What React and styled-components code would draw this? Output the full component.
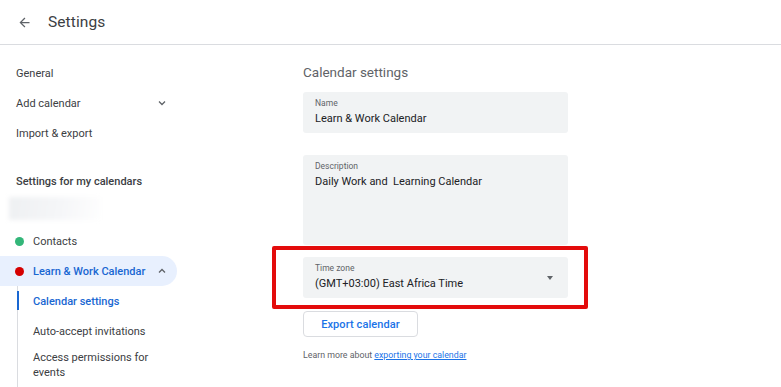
import React from "react";
import styled, { createGlobalStyle } from "styled-components";

const GlobalStyle = createGlobalStyle`
  html, body {
    margin: 0;
    padding: 0;
    background: #fff;
    font-family: Roboto, "Liberation Sans", Arial, sans-serif;
    color: #3c4043;
    overflow: hidden;
  }
`;

const Page = styled.div`
  width: 781px;
  height: 387px;
  display: flex;
  flex-direction: column;
  overflow: hidden;
`;

const Header = styled.header`
  height: 44px;
  flex: none;
  display: flex;
  align-items: center;
  border-bottom: 1px solid #dadce0;
  padding-left: 17px;
  gap: 16px;
`;

const BackButton = styled.span`
  display: flex;
  width: 15px;
  height: 15px;
  color: #5f6368;
`;

const Title = styled.h1`
  margin: 0;
  font-size: 15.5px;
  font-weight: 400;
  color: #3c4043;
  letter-spacing: 0.1px;
`;

const Body = styled.div`
  flex: 1;
  display: flex;
  min-height: 0;
`;

const Sidebar = styled.nav`
  width: 260px;
  flex: none;
  padding-top: 13px;
  display: flex;
  flex-direction: column;
`;

const NavItem = styled.div`
  width: 177px;
  height: 30px;
  box-sizing: border-box;
  display: flex;
  align-items: center;
  padding-left: ${(p) => (p.$indent ? "33px" : "16px")};
  padding-right: 10px;
  font-size: 11px;
  color: ${(p) => (p.$active ? "#1967d2" : "#3c4043")};
  font-weight: ${(p) => (p.$active ? 500 : 400)};
  background: ${(p) => (p.$active ? "#e8f0fe" : "transparent")};
  border-radius: 0 15px 15px 0;
`;

const Grow = styled.span`
  flex: 1;
`;

const Section = styled.div`
  margin-top: 18px;
  height: 30px;
  display: flex;
  align-items: center;
  padding-left: 16px;
  font-size: 11px;
  font-weight: 500;
  color: #3c4043;
`;

const Blurred = styled.div`
  margin: 1px 0 6px 9px;
  width: 92px;
  height: 23px;
  background: linear-gradient(100deg, #eef0f2 0%, #f5f6f8 55%, #fefefe 100%);
  filter: blur(2px);
`;

const Dot = styled.span`
  width: 9px;
  height: 9px;
  border-radius: 50%;
  background: ${(p) => p.$color};
  margin-left: -1px;
  margin-right: 9px;
  flex: none;
`;

const SubList = styled.div`
  margin-left: 17px;
  border-left: 1px solid #dadce0;
  flex: 1;
`;

const SubItem = styled.div`
  position: relative;
  width: 160px;
  box-sizing: border-box;
  padding: ${(p) => (p.$wrap ? "4px 16px 0 15px" : "0 0 0 15px")};
  height: ${(p) => (p.$wrap ? "auto" : "30px")};
  display: flex;
  align-items: center;
  font-size: 11px;
  line-height: 15px;
  color: ${(p) => (p.$active ? "#1967d2" : "#3c4043")};
  font-weight: ${(p) => (p.$active ? 500 : 400)};

  &::before {
    content: "";
    display: ${(p) => (p.$active ? "block" : "none")};
    position: absolute;
    left: -1px;
    top: 5px;
    bottom: 6px;
    width: 2px;
    background: #1967d2;
  }
`;

const Main = styled.main`
  flex: 1;
  padding: 17px 0 0 43px;
  display: flex;
  flex-direction: column;
`;

const PanelTitle = styled.h2`
  margin: 0 0 10px;
  font-size: 13.5px;
  line-height: 20px;
  font-weight: 400;
  color: #5f6368;
`;

const Field = styled.div`
  width: 265px;
  height: ${(p) => p.$height}px;
  box-sizing: border-box;
  background: #f1f3f4;
  border-radius: 3px;
  padding: 6px 12px 0;
  display: flex;
  align-items: flex-start;
  margin-bottom: ${(p) => p.$gap || 0}px;
`;

const FieldText = styled.div`
  flex: 1;
  display: flex;
  flex-direction: column;
`;

const Label = styled.span`
  font-size: 8.5px;
  line-height: 11px;
  color: #5f6368;
`;

const Value = styled.span`
  margin-top: 2px;
  font-size: 11px;
  line-height: 16px;
  color: #202124;
`;

const Caret = styled.span`
  margin-top: 13px;
  margin-right: 3px;
  width: 0;
  height: 0;
  border-left: 3.5px solid transparent;
  border-right: 3.5px solid transparent;
  border-top: 4px solid #5f6368;
`;

const Highlight = styled.div`
  position: relative;
  width: 265px;
  margin-bottom: 13px;
`;

const RedFrame = styled.div`
  position: absolute;
  top: -11px;
  bottom: -11px;
  left: -31px;
  right: -20px;
  border: 4px solid #e30b0b;
  border-radius: 2px;
  pointer-events: none;
`;

const Button = styled.button`
  width: 115px;
  height: 26px;
  box-sizing: border-box;
  background: #fff;
  border: 1px solid #dadce0;
  border-radius: 4px;
  font-family: inherit;
  font-size: 11px;
  font-weight: 500;
  color: #1a73e8;
  letter-spacing: 0.1px;
  padding: 0;
  margin-bottom: 12px;
`;

const Note = styled.p`
  margin: 0;
  font-size: 8.8px;
  line-height: 12px;
  color: #5f6368;

  & a {
    color: #1a73e8;
    text-decoration: underline;
  }
`;

const Chevron = ({ up }) => (
  <svg width="10" height="10" viewBox="0 0 10 10">
    <path
      d={up ? "M2 6.5 L5 3.5 L8 6.5" : "M2 3.5 L5 6.5 L8 3.5"}
      fill="none"
      stroke="#5f6368"
      strokeWidth="1.3"
    />
  </svg>
);

export default function App() {
  return (
    <Page>
      <GlobalStyle />
      <Header>
        <BackButton>
          <svg width="15" height="15" viewBox="0 0 24 24">
            <path
              d="M20 11H7.83l5.59-5.59L12 4l-8 8 8 8 1.41-1.41L7.83 13H20v-2z"
              fill="#5f6368"
            />
          </svg>
        </BackButton>
        <Title>Settings</Title>
      </Header>
      <Body>
        <Sidebar>
          <NavItem>General</NavItem>
          <NavItem>
            <Grow>Add calendar</Grow>
            <Chevron />
          </NavItem>
          <NavItem>Import &amp; export</NavItem>
          <Section>Settings for my calendars</Section>
          <Blurred />
          <NavItem>
            <Dot $color="#33b679" />
            Contacts
          </NavItem>
          <NavItem $active>
            <Dot $color="#d50000" />
            <Grow>Learn &amp; Work Calendar</Grow>
            <Chevron up />
          </NavItem>
          <SubList>
            <SubItem $active>Calendar settings</SubItem>
            <SubItem>Auto-accept invitations</SubItem>
            <SubItem $wrap>Access permissions for events</SubItem>
          </SubList>
        </Sidebar>
        <Main>
          <PanelTitle>Calendar settings</PanelTitle>
          <Field $height={41} $gap={22}>
            <FieldText>
              <Label>Name</Label>
              <Value>Learn &amp; Work Calendar</Value>
            </FieldText>
          </Field>
          <Field $height={90} $gap={12}>
            <FieldText>
              <Label>Description</Label>
              <Value>Daily Work and&nbsp; Learning Calendar</Value>
            </FieldText>
          </Field>
          <Highlight>
            <Field $height={41}>
              <FieldText>
                <Label>Time zone</Label>
                <Value>(GMT+03:00) East Africa Time</Value>
              </FieldText>
              <Caret />
            </Field>
            <RedFrame />
          </Highlight>
          <Button>Export calendar</Button>
          <Note>
            Learn more about <a href="#export">exporting your calendar</a>
          </Note>
        </Main>
      </Body>
    </Page>
  );
}
